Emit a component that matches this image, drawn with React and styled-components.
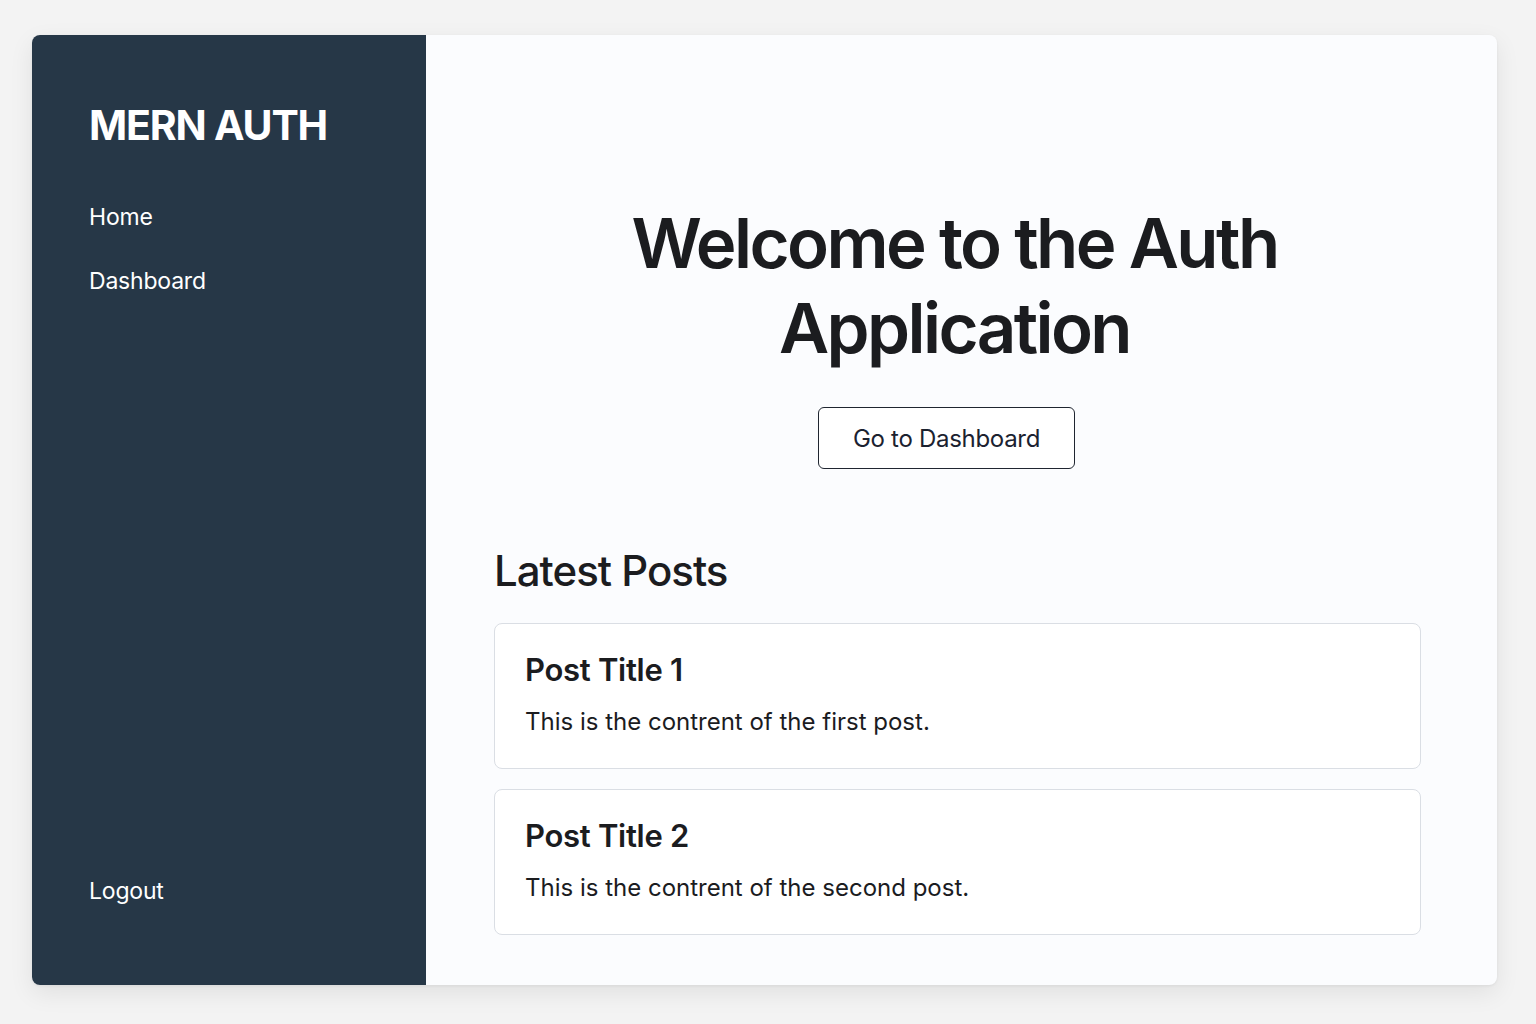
import React from 'react';
import styled, { createGlobalStyle } from 'styled-components';

const GlobalStyle = createGlobalStyle`
    html, body {
        margin: 0;
        padding: 0;
        background: #f3f3f3;
        font-family: 'Inter', 'Noto Sans', sans-serif;
    }
    * {
        box-sizing: border-box;
    }
`;

const Page = styled.div`
    width: 1536px;
    height: 1024px;
    padding: 35px 39px 39px 32px;
`;

const Shell = styled.div`
    display: flex;
    height: 950px;
    border-radius: 8px;
    overflow: hidden;
    background: #fbfcfe;
    box-shadow: 0 8px 24px rgba(0, 0, 0, 0.08), 0 1px 3px rgba(0, 0, 0, 0.06);
`;

const Sidebar = styled.aside`
    display: flex;
    flex-direction: column;
    width: 394px;
    flex-shrink: 0;
    background: #263747;
    padding: 66px 0 80px 57px;
`;

const Brand = styled.h1`
    margin: 0 0 54px;
    font-size: 41px;
    font-weight: 700;
    letter-spacing: -1.2px;
    line-height: 48px;
    color: #ffffff;
`;

const NavList = styled.nav`
    display: flex;
    flex-direction: column;
    gap: 36px;
    flex: 1;
`;

const NavLink = styled.a`
    font-size: 23px;
    line-height: 28px;
    letter-spacing: -0.2px;
    color: #ffffff;
    text-decoration: none;
    cursor: pointer;
`;

const Main = styled.main`
    flex: 1;
    display: flex;
    flex-direction: column;
    padding: 166px 76px 50px 68px;
`;

const Hero = styled.section`
    display: flex;
    flex-direction: column;
    align-items: center;
`;

const Headline = styled.h2`
    margin: 0 6px 0 0;
    font-size: 69px;
    font-weight: 600;
    letter-spacing: -2.6px;
    line-height: 85px;
    text-align: center;
    color: #1b1c1f;
`;

const OutlineButton = styled.button`
    margin: 36px 22px 0 0;
    width: 257px;
    height: 62px;
    background: #ffffff;
    border: 1px solid #1f2530;
    border-radius: 6px;
    font-family: inherit;
    font-size: 24px;
    letter-spacing: -0.3px;
    color: #1b2230;
    cursor: pointer;
`;

const SectionTitle = styled.h3`
    margin: 76px 0 26px;
    font-size: 42px;
    font-weight: 500;
    letter-spacing: -1px;
    line-height: 52px;
    color: #1b1c1f;
`;

const PostList = styled.div`
    display: flex;
    flex-direction: column;
    gap: 20px;
`;

const PostCard = styled.article`
    height: 146px;
    padding: 27px 30px;
    background: #ffffff;
    border: 1px solid #dadee4;
    border-radius: 8px;
`;

const PostTitle = styled.h4`
    margin: 0 0 17px;
    font-size: 31px;
    font-weight: 600;
    letter-spacing: -0.3px;
    line-height: 38px;
    color: #1b1c1f;
`;

const PostBody = styled.p`
    margin: 0;
    font-size: 24px;
    line-height: 32px;
    color: #1b1c1f;
`;

const posts = [
    { id: 1, title: 'Post Title 1', body: 'This is the contrent of the first post.' },
    { id: 2, title: 'Post Title 2', body: 'This is the contrent of the second post.' },
];

const App = () => (
    <Page>
        <GlobalStyle />
        <Shell>
            <Sidebar>
                <Brand>MERN AUTH</Brand>
                <NavList>
                    <NavLink>Home</NavLink>
                    <NavLink>Dashboard</NavLink>
                </NavList>
                <NavLink>Logout</NavLink>
            </Sidebar>
            <Main>
                <Hero>
                    <Headline>
                        Welcome to the Auth
                        <br />
                        Application
                    </Headline>
                    <OutlineButton>Go to Dashboard</OutlineButton>
                </Hero>
                <SectionTitle>Latest Posts</SectionTitle>
                <PostList>
                    {posts.map(post => (
                        <PostCard key={post.id}>
                            <PostTitle>{post.title}</PostTitle>
                            <PostBody>{post.body}</PostBody>
                        </PostCard>
                    ))}
                </PostList>
            </Main>
        </Shell>
    </Page>
);

export default App;
